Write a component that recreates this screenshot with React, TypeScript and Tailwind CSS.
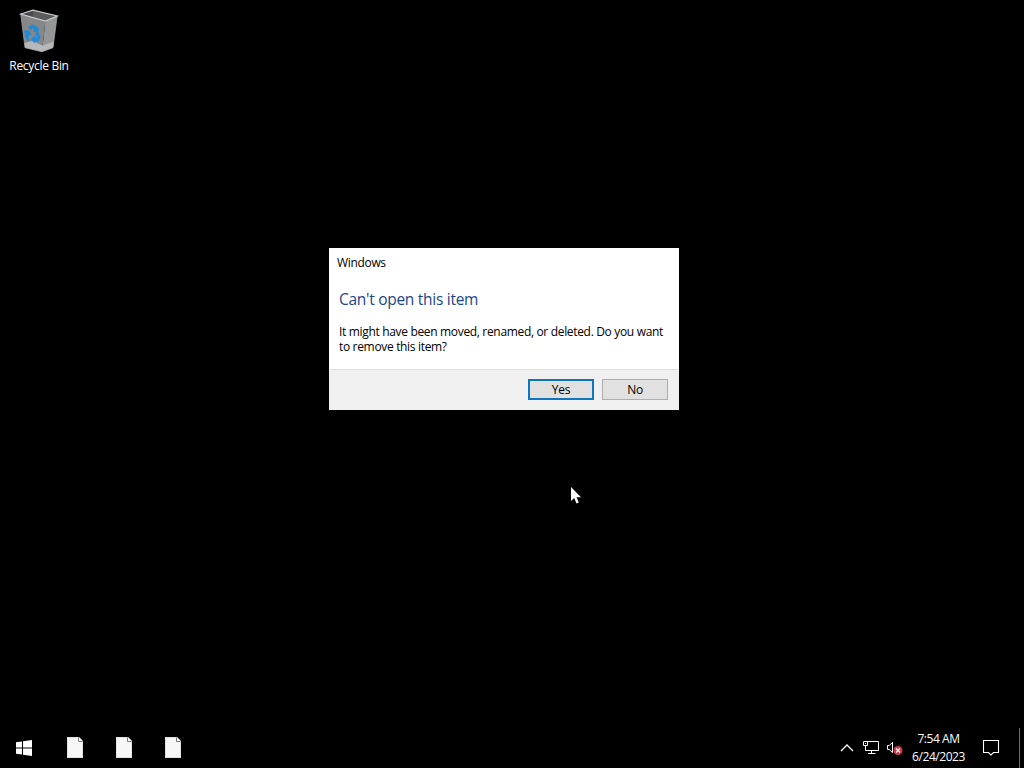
import { clsx } from "clsx";

const pinnedItems = ["item-1", "item-2", "item-3"];

function RecycleBinIcon() {
  return (
    <svg width="40" height="44" viewBox="0 0 40 44" aria-hidden="true">
      {/* Opening */}
      <path d="M1.7 5 14 1.2 38.2 7 26.4 12Z" fill="#47494a" />
      <path d="M14 1.2 38.2 7 26.4 12 14 9Z" fill="#5a5c5d" />
      {/* Sides */}
      <path d="M1.7 5 26.4 12 23 42.8 6 38.7Z" fill="#858789" />
      <path d="M26.4 12 38.2 7 34 38.7 23 42.8Z" fill="#949698" />
      <path d="M5.4 34 13 32 23.6 36.5 34.8 32.5 34 38.7 23 42.8 6 38.7Z" fill="#b6b8b9" />
      <path d="M1.7 5 14 1.2 38.2 7 26.4 12Z" fill="none" stroke="#c6c8c9" strokeWidth="1.2" />
      <path d="M1.7 5 6 38.7 23 42.8 34 38.7 38.2 7" fill="none" stroke="#a2a4a5" strokeWidth=".7" />
      {/* Recycling arrows */}
      <g fill="#1f8ada" transform="translate(1.2 .8)">
        <path d="m8 17.2 3.4-2.5 4.4 1.2 1.6 2.8 1.9-.7-1.9 5.2-5-1.8 1.8-1-1.6-2.4-2 2.4Z" />
        <path d="m4.2 20.4 4.9.3 1.9 4.7-1.8-.5-1.1 3.1 1.5 2.9-3-.4-2-4.4 1-2.8-1.7-.4Z" />
        <path d="m18 22.2 2.3 5.3-2.2 4-3.5.2v2l-3.8-4.3 3.8-3.6v2.1h2.1l-1.7-3.8Z" />
      </g>
    </svg>
  );
}

function StartIcon() {
  return (
    <svg width="16" height="16" viewBox="0 0 16 16" fill="#fff" aria-hidden="true">
      <path d="M0 2.3 6 1.4V7.4H0ZM7 1.2 16 0V7.4H7ZM0 8.4H6V14.5L0 13.7ZM7 8.4H16V16L7 14.7Z" />
    </svg>
  );
}

function FileIcon() {
  return (
    <svg width="16" height="21" viewBox="0 0 16 21" aria-hidden="true">
      <path d="M0 0H12L16 4V21H0Z" fill="#f7f7f7" />
      <path d="M.5 .5H11.8L15.5 4.2V20.5H.5Z" fill="none" stroke="#d9d9d9" strokeWidth=".8" />
      <path d="M11.5 .5V4.5H15.5" fill="#fff" stroke="#777" />
    </svg>
  );
}

function ChevronIcon() {
  return (
    <svg width="14" height="8" viewBox="0 0 14 8" fill="none" stroke="#fff" strokeWidth="1.4" aria-hidden="true">
      <path d="M1 7 7 1 13 7" />
    </svg>
  );
}

function NetworkIcon() {
  return (
    <svg width="17" height="14" viewBox="0 0 17 14" fill="none" stroke="#fff" aria-hidden="true">
      <path d="M4 .5H15.5V9.5H2.5V5M8.5 9.5V12.5M5 12.5H12.5" />
      <path d="M.5 .5H4.5V4.5H.5ZM2 2.5H3" />
    </svg>
  );
}

function MutedVolumeIcon() {
  return (
    <svg width="17" height="15" viewBox="0 0 17 15" aria-hidden="true">
      <path d="M1.5 4.5H3.3L6.5 1.3V11.7L3.3 8.5H1.5Z" fill="none" stroke="#fff" />
      <circle cx="12" cy="9.5" r="4.6" fill="#c93848" />
      <path d="m10 7.5 4 4m0-4-4 4" stroke="#fff" strokeWidth="1.1" />
    </svg>
  );
}

function ActionCenterIcon() {
  return (
    <svg width="17" height="16" viewBox="0 0 17 16" fill="none" stroke="#fff" strokeWidth="1.1" aria-hidden="true">
      <path d="M.5 .5H15.5V12.5H10.5L8 15 5.5 12.5H.5Z" />
    </svg>
  );
}

function DialogButton({ label, primary = false }: { label: string; primary?: boolean }) {
  return (
    <button
      className={clsx(
        "flex h-[21px] w-[66px] items-center justify-center bg-[#e1e1e1] text-xs tracking-[-0.3px]",
        primary ? "border-2 border-[#0f76bd]" : "border border-[#adadad]",
      )}
    >
      {label}
    </button>
  );
}

function ErrorDialog() {
  return (
    <section
      role="dialog"
      aria-labelledby="dialog-title"
      className="absolute top-[248px] left-[329px] flex h-[162px] w-[350px] flex-col bg-white text-black"
    >
      <header className="flex h-[30px] items-center px-2 text-xs tracking-[-0.33px]">Windows</header>
      <div className="flex-1 px-2.5 pt-2.5">
        <h1 id="dialog-title" className="text-[15.5px] leading-[22px] tracking-[-0.28px] text-[#1c4587]">
          Can't open this item
        </h1>
        <p className="mt-3.5 text-xs leading-[15px] tracking-[-0.33px] whitespace-nowrap">
          It might have been moved, renamed, or deleted. Do you want
          <br />
          to remove this item?
        </p>
      </div>
      <footer className="flex h-[41px] items-start justify-end gap-2 border-t border-[#dfdfdf] bg-[#f0f0f0] pt-[9px] pr-[11px]">
        <DialogButton label="Yes" primary />
        <DialogButton label="No" />
      </footer>
    </section>
  );
}

function Taskbar() {
  return (
    <footer className="flex h-10 items-center justify-between">
      <div className="flex h-full items-center">
        <button className="flex w-12 justify-center" aria-label="Start">
          <StartIcon />
        </button>
        <div className="-mt-px flex gap-[33px] pl-[18.5px]">
          {pinnedItems.map((item) => (
            <FileIcon key={item} />
          ))}
        </div>
      </div>

      {/* System tray */}
      <div className="flex h-full items-center">
        <ChevronIcon />
        <div className="ml-[9px]">
          <NetworkIcon />
        </div>
        <div className="ml-[6px]">
          <MutedVolumeIcon />
        </div>
        <div className="ml-2 w-[55px] text-center text-xs leading-[18px] tracking-[-0.45px] whitespace-nowrap">
          <div>7:54 AM</div>
          <div>6/24/2023</div>
        </div>
        <div className="ml-[17px]">
          <ActionCenterIcon />
        </div>
        <div className="ml-[19px] h-full w-[5px] border-l border-[#6b6b6b]" />
      </div>
    </footer>
  );
}

export default function App() {
  return (
    <div className="relative flex h-screen w-screen flex-col overflow-hidden bg-black font-['Open_Sans','Noto_Sans',sans-serif] text-white select-none">
      <main className="flex-1">
        <div className="flex w-[78px] flex-col items-center pt-[9px]">
          <RecycleBinIcon />
          <span className="mt-1 text-xs leading-[18px] tracking-[-0.3px] whitespace-nowrap">Recycle Bin</span>
        </div>
      </main>
      <Taskbar />
      <ErrorDialog />

      {/* Mouse pointer */}
      <svg
        className="absolute top-[486px] left-[570px]"
        width="13"
        height="19"
        viewBox="0 0 13 19"
        fill="#fff"
        aria-hidden="true"
      >
        <path d="M1 1V15L4.2 12 6.5 17.5 8.8 16.5 6.5 11.2H11Z" />
      </svg>
    </div>
  );
}
